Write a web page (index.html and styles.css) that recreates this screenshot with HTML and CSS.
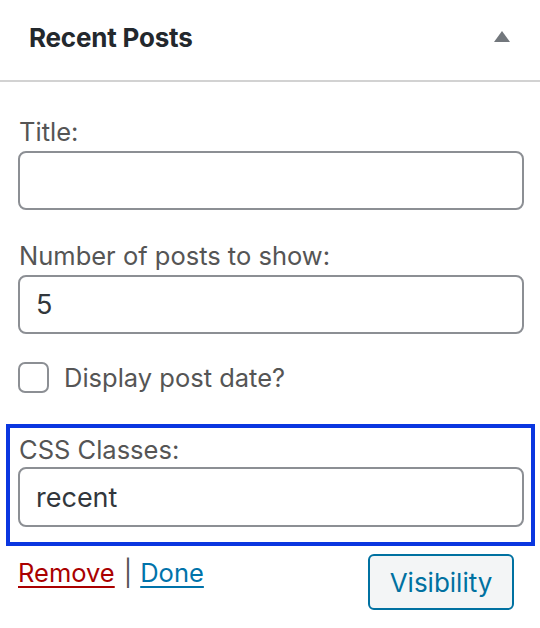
FILE: index.html
```html
<!DOCTYPE html>
<html>
<head>
<meta charset="utf-8">
<link rel="stylesheet" href="styles.css">
</head>
<body>
<div class="widget">
  <div class="widget-top">
    <h3 class="widget-title">Recent Posts</h3>
    <span class="toggle" aria-hidden="true"></span>
  </div>
  <div class="widget-inside">
    <p class="field">
      <label class="label">Title:</label>
      <input class="text-input" type="text" value="">
    </p>
    <p class="field">
      <label class="label">Number of posts to show:</label>
      <input class="text-input" type="text" value="5">
    </p>
    <p class="check-row">
      <span class="checkbox"></span>
      <label class="check-label">Display post date?</label>
    </p>
    <div class="highlight">
      <label class="label">CSS Classes:</label>
      <input class="text-input" type="text" value="recent">
    </div>
    <div class="actions">
      <div class="links">
        <a class="link remove" href="#">Remove</a><span class="sep">|</span><a class="link done" href="#">Done</a>
      </div>
      <button class="button" type="button">Visibility</button>
    </div>
  </div>
</div>
</body>
</html>
```

FILE: styles.css
```css
* { box-sizing: border-box; }
html, body { margin: 0; padding: 0; background: #fff; }
body {
  font-family: Inter, "Liberation Sans", Arial, sans-serif;
  color: #555;
  width: 540px;
  height: 628px;
  overflow: hidden;
}
.widget-top {
  height: 82px;
  display: flex;
  align-items: center;
  justify-content: space-between;
  padding: 0 30px 6px 29px;
  border-bottom: 2px solid #d2d2d2;
}
.widget-title {
  margin: 0;
  font-size: 26px;
  font-weight: 700;
  color: #23282d;
  letter-spacing: -0.2px;
}
.toggle {
  width: 0;
  height: 0;
  border-left: 8px solid transparent;
  border-right: 8px solid transparent;
  border-bottom: 11px solid #72777c;
  margin-bottom: 2px;
}
.widget-inside {
  padding: 33px 16px 0 18px;
}
.field {
  margin: 0 0 29px;
  display: flex;
  flex-direction: column;
}
.label {
  font-size: 25.5px;
  line-height: 34px;
  color: #555;
  display: block;
  margin-bottom: 2px;
  padding-left: 1px;
}
.text-input {
  width: 100%;
  height: 59px;
  border: 2px solid #8c8f94;
  border-radius: 8px;
  background: #fff;
  font-family: inherit;
  font-size: 27px;
  color: #32373c;
  padding: 0 16px;
  outline: none;
}
.check-row {
  display: flex;
  align-items: center;
  margin: -1px 0 31px;
  gap: 15px;
}
.checkbox {
  width: 31px;
  height: 31px;
  border: 2px solid #8c8f94;
  border-radius: 7px;
  background: #fff;
  flex: none;
}
.check-label {
  font-size: 25.5px;
  color: #555;
}
.highlight {
  margin: 0 -11px 0 -12px;
  border: 4px solid #0a36e0;
  padding: 5px 7px 15px 8px;
}
.highlight .label { margin-bottom: 0; }
.highlight .text-input { height: 60px; }
.actions {
  display: flex;
  justify-content: space-between;
  align-items: flex-start;
  padding-top: 9px;
  padding-right: 10px;
}
.links {
  font-size: 25.5px;
  line-height: 36px;
  padding-top: 0;
}
.link { text-decoration: underline; text-underline-offset: 4px; text-decoration-thickness: 2px; }
.remove { color: #a00; }
.done { color: #0073aa; }
.sep { color: #555; margin: 0 8px 0 9px; }
.button {
  height: 56px;
  width: 146px;
  margin-top: -1px;
  border: 2px solid #0071a1;
  border-radius: 6px;
  background: #f3f5f6;
  color: #0071a1;
  font-family: inherit;
  font-size: 26px;
  padding: 0;
}
```
